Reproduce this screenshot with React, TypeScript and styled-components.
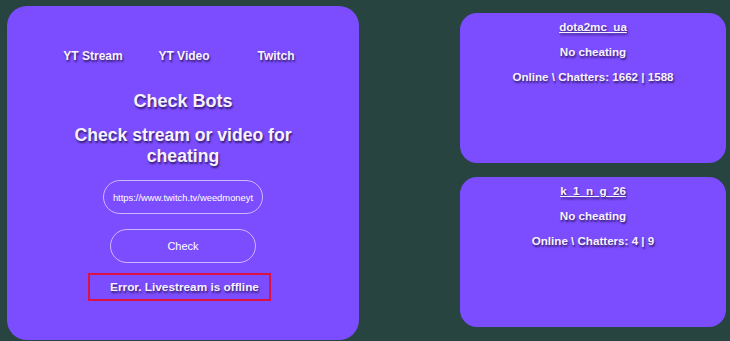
import styled, { createGlobalStyle } from "styled-components";

const GlobalStyle = createGlobalStyle`
  html, body {
    margin: 0;
    padding: 0;
    background-color: #274441;
    font-family: "Liberation Sans", Arial, sans-serif;
  }
`;

const Page = styled.div`
  display: flex;
  align-items: flex-start;
  gap: 101px;
  padding: 6px 0 0 7px;
  width: 730px;
  height: 341px;
  box-sizing: border-box;
  overflow: hidden;
`;

const MainCard = styled.div`
  width: 352px;
  height: 334px;
  flex-shrink: 0;
  background-color: #7c4dff;
  border-radius: 20px;
  display: flex;
  flex-direction: column;
  align-items: center;
  box-sizing: border-box;
  padding-top: 41px;
  color: #f6f2ff;
  text-shadow: 1px 2px 2px rgba(30, 10, 60, 0.75);
`;

const Tabs = styled.nav`
  display: grid;
  grid-template-columns: 90px 92px 92px;
  width: 274px;
  margin-left: 4px;
`;

const Tab = styled.span`
  text-align: center;
  font-size: 12px;
  font-weight: bold;
  line-height: 18px;
`;

const Title = styled.h1`
  margin: 25px 0 0;
  font-size: 18px;
  font-weight: bold;
  line-height: 22px;
`;

const Subtitle = styled.h2`
  margin: 13px 0 0;
  width: 260px;
  text-align: center;
  font-size: 17.6px;
  font-weight: bold;
  line-height: 21px;
`;

const Input = styled.input`
  margin-top: 13px;
  width: 160px;
  height: 34px;
  box-sizing: border-box;
  border: 1px solid #cbb9ff;
  border-radius: 17px;
  background: transparent;
  color: #ffffff;
  font-family: "Liberation Sans", Arial, sans-serif;
  font-size: 9.4px;
  padding: 0 4px;
  outline: none;
  text-align: center;
`;

const Button = styled.button`
  margin-top: 15px;
  width: 146px;
  height: 34px;
  border: 1px solid #cbb9ff;
  border-radius: 17px;
  background: transparent;
  color: #ffffff;
  font-family: "Liberation Sans", Arial, sans-serif;
  font-size: 11px;
  text-shadow: none;
`;

const ErrorBox = styled.div`
  margin-top: 10px;
  margin-right: 7px;
  width: 183px;
  height: 28px;
  box-sizing: border-box;
  border: 2px solid #dc1243;
  display: flex;
  align-items: center;
  justify-content: center;
  padding-left: 10px;
  font-size: 11.8px;
  font-weight: bold;
`;

const Side = styled.div`
  display: flex;
  flex-direction: column;
  gap: 14px;
  padding-top: 7px;
`;

const StreamCard = styled.div`
  width: 266px;
  height: 150px;
  background-color: #7c4dff;
  border-radius: 17px;
  display: flex;
  flex-direction: column;
  align-items: center;
  gap: 9px;
  padding-top: 6px;
  box-sizing: border-box;
  color: #f6f2ff;
  text-shadow: 1px 2px 2px rgba(30, 10, 60, 0.75);
  font-size: 11.6px;
  font-weight: bold;
  line-height: 16px;
`;

const Channel = styled.span`
  text-decoration: underline;
`;

const Line = styled.span``;

const streams = [
  { name: "dota2mc_ua", online: 1662, chatters: 1588 },
  { name: "k_1_n_g_26", online: 4, chatters: 9 },
];

export default function App() {
  return (
    <>
      <GlobalStyle />
      <Page>
        <MainCard>
          <Tabs>
            <Tab>YT Stream</Tab>
            <Tab>YT Video</Tab>
            <Tab>Twitch</Tab>
          </Tabs>
          <Title>Check Bots</Title>
          <Subtitle>Check stream or video for cheating</Subtitle>
          <Input readOnly value="https://www.twitch.tv/weedmoneyt" />
          <Button>Check</Button>
          <ErrorBox>Error. Livestream is offline</ErrorBox>
        </MainCard>
        <Side>
          {streams.map((s) => (
            <StreamCard key={s.name}>
              <Channel>{s.name}</Channel>
              <Line>No cheating</Line>
              <Line>
                Online \ Chatters: {s.online} | {s.chatters}
              </Line>
            </StreamCard>
          ))}
        </Side>
      </Page>
    </>
  );
}
